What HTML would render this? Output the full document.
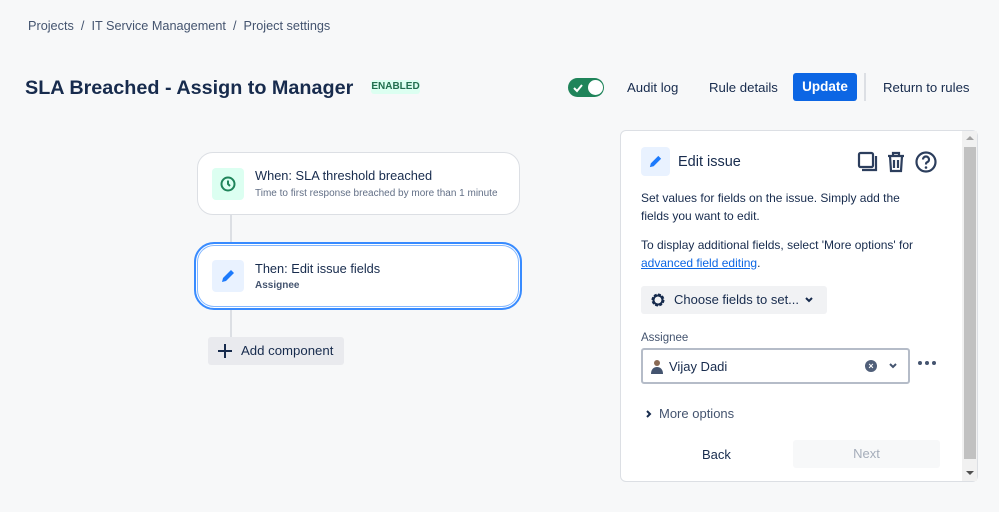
<!DOCTYPE html>
<html><head><style>
*{box-sizing:border-box;margin:0;padding:0}
body{width:999px;height:512px;background:#f7f8f9;font-family:"Liberation Sans",sans-serif;color:#172b4d;position:relative;overflow:hidden}
.a{position:absolute;white-space:nowrap}
</style></head><body>
<div class="a" style="left:28px;top:19px;font-size:12.7px;color:#44546f">Projects&nbsp;&nbsp;/&nbsp;&nbsp;IT Service Management&nbsp;&nbsp;/&nbsp;&nbsp;Project settings</div>
<div class="a" style="left:25px;top:77px;font-size:19.8px;font-weight:700;color:#172b4d">SLA Breached - Assign to Manager</div>
<div class="a" style="left:371px;top:80px;width:49px;height:14px;background:#dcfff1;color:#216e4e;font-size:10px;font-weight:700;text-align:center;line-height:14px;border-radius:3px">ENABLED</div>
<div class="a" style="left:568px;top:78px;width:36px;height:19px;background:#1f845a;border-radius:10px"></div>
<div class="a" style="left:588px;top:80px;width:15px;height:15px;background:#fff;border-radius:50%"></div>
<svg class="a" style="left:572px;top:82px" width="12" height="11" viewBox="0 0 12 11"><path d="M2 6l3 3 5-6" stroke="#fff" stroke-width="2" fill="none"/></svg>
<div class="a" style="left:627px;top:80px;font-size:13.2px;font-weight:500">Audit log</div>
<div class="a" style="left:709px;top:80px;font-size:13.2px;font-weight:500">Rule details</div>
<div class="a" style="left:793px;top:73px;width:64px;height:28px;background:#0c66e4;border-radius:3px;color:#fff;font-size:13.5px;font-weight:700;text-align:center;line-height:28px">Update</div>
<div class="a" style="left:864px;top:73px;width:2px;height:28px;background:#dcdfe4"></div>
<div class="a" style="left:883px;top:80px;font-size:13.2px;font-weight:500">Return to rules</div>

<div class="a" style="left:230px;top:214px;width:2px;height:126px;background:#dcdfe4"></div>
<div class="a" style="left:197px;top:152px;width:323px;height:63px;background:#fff;border:1px solid #dcdfe4;border-radius:16px"></div>
<div class="a" style="left:212px;top:168px;width:32px;height:32px;background:#dcfff1;border-radius:4px"></div>
<svg class="a" style="left:219px;top:175px" width="18" height="18" viewBox="0 0 18 18"><circle cx="9" cy="9" r="6.5" stroke="#1f845a" stroke-width="2" fill="none"/><path d="M9 5.5V9l2 2" stroke="#1f845a" stroke-width="2" fill="none"/></svg>
<div class="a" style="left:255px;top:168px;font-size:12.8px">When: SLA threshold breached</div>
<div class="a" style="left:255px;top:188px;font-size:10px;color:#626f86">Time to first response breached by more than 1 minute</div>

<div class="a" style="left:194px;top:242px;width:328px;height:68px;background:#fff;border:2px solid #388bff;border-radius:20px;box-shadow:0 0 0 1px #fff inset,0 0 0 2px #85b8ff inset"></div>
<div class="a" style="left:212px;top:260px;width:32px;height:32px;background:#e9f2ff;border-radius:4px"></div>
<svg class="a" style="left:220px;top:268px" width="16" height="16" viewBox="0 0 16 16"><path d="M2 14l1-4 8-8 3 3-8 8z" fill="#1d7afc"/></svg>
<div class="a" style="left:255px;top:261px;font-size:12.8px">Then: Edit issue fields</div>
<div class="a" style="left:255px;top:280px;font-size:10px;font-weight:700;color:#44546f">Assignee</div>

<div class="a" style="left:208px;top:337px;width:136px;height:28px;background:#e9eaee;border-radius:3px"></div>
<svg class="a" style="left:217px;top:343px" width="16" height="16" viewBox="0 0 16 16"><path d="M8 1v14M1 8h14" stroke="#172b4d" stroke-width="2"/></svg>
<div class="a" style="left:241px;top:343px;font-size:13.2px;font-weight:500">Add component</div>

<div class="a" style="left:620px;top:130px;width:358px;height:352px;background:#fff;border:1px solid #dcdfe4;border-radius:6px"></div>
<div class="a" style="left:962px;top:131px;width:15px;height:350px;background:#f1f1f1"></div>
<div class="a" style="left:964px;top:147px;width:12px;height:312px;background:#c1c1c1"></div>
<div class="a" style="left:966px;top:136px;width:0;height:0;border-left:4px solid transparent;border-right:4px solid transparent;border-bottom:4px solid #a3a3a3"></div>
<div class="a" style="left:966px;top:471px;width:0;height:0;border-left:4px solid transparent;border-right:4px solid transparent;border-top:4px solid #505050"></div>

<div class="a" style="left:641px;top:147px;width:29px;height:29px;background:#e9f2ff;border-radius:4px"></div>
<svg class="a" style="left:648px;top:154px" width="15" height="15" viewBox="0 0 16 16"><path d="M2 14l1-4 8-8 3 3-8 8z" fill="#1d7afc"/></svg>
<div class="a" style="left:678px;top:154px;font-size:14.5px;font-weight:500">Edit issue</div>
<svg class="a" style="left:857px;top:150px" width="84" height="24" viewBox="0 0 84 24"><rect x="2" y="3" width="14" height="14" rx="1.5" stroke="#2c3e5d" stroke-width="2.2" fill="none"/><path d="M19 6v14H5" stroke="#2c3e5d" stroke-width="2.2" fill="none"/><path d="M31 6h16M36 6V3h6v3M33 6l1 15h10l1-15M37 10v8M41 10v8" stroke="#2c3e5d" stroke-width="2.2" fill="none"/><circle cx="69" cy="12" r="9.5" stroke="#2c3e5d" stroke-width="2.2" fill="none"/><path d="M66 9.5a3 3 0 1 1 4 2.8c-1 .4-1 1-1 2.2" stroke="#2c3e5d" stroke-width="2.2" fill="none"/><circle cx="69" cy="17.5" r="1.3" fill="#2c3e5d"/></svg>
<div class="a" style="left:641px;top:190px;font-size:12px;line-height:17.5px;color:#172b4d">Set values for fields on the issue. Simply add the<br>fields you want to edit.</div>
<div class="a" style="left:641px;top:236px;font-size:12px;line-height:18px">To display additional fields, select 'More options' for<br><span style="color:#0c66e4;text-decoration:underline">advanced field editing</span>.</div>
<div class="a" style="left:641px;top:286px;width:186px;height:28px;background:#f1f2f4;border-radius:3px"></div>
<svg class="a" style="left:650px;top:292px" width="16" height="16" viewBox="0 0 16 16"><circle cx="8" cy="8" r="5" stroke="#172b4d" stroke-width="3" fill="none" stroke-dasharray="2.6 1.3"/><circle cx="8" cy="8" r="4.5" stroke="#172b4d" stroke-width="2" fill="none"/></svg>
<div class="a" style="left:674px;top:292px;font-size:13px;font-weight:500">Choose fields to set...</div>
<svg class="a" style="left:804px;top:296px" width="10" height="8" viewBox="0 0 10 8"><path d="M2 2l3 3 3-3" stroke="#172b4d" stroke-width="2" fill="none"/></svg>
<div class="a" style="left:641px;top:332px;font-size:11.5px;color:#44546f">Assignee</div>
<div class="a" style="left:641px;top:348px;width:269px;height:36px;border:2px solid #b5bcc8;border-radius:3px"></div>
<svg class="a" style="left:649px;top:359px" width="16" height="15" viewBox="0 0 16 15"><circle cx="8" cy="4" r="3" fill="#8a6a55"/><path d="M2 15c0-5 3-7 6-7s6 2 6 7z" fill="#44546f"/></svg>
<div class="a" style="left:669px;top:359px;font-size:13px">Vijay Dadi</div>
<div class="a" style="left:865px;top:360px;width:12px;height:12px;border-radius:50%;background:#505f79;color:#fff;font-size:9px;font-weight:700;text-align:center;line-height:12px">×</div>
<svg class="a" style="left:888px;top:362px" width="10" height="8" viewBox="0 0 10 8"><path d="M2 2l3 3 3-3" stroke="#44546f" stroke-width="2" fill="none"/></svg>
<svg class="a" style="left:917px;top:360px" width="20" height="6"><circle cx="3" cy="3" r="2" fill="#44546f"/><circle cx="10" cy="3" r="2" fill="#44546f"/><circle cx="17" cy="3" r="2" fill="#44546f"/></svg>
<svg class="a" style="left:645px;top:409px" width="8" height="10" viewBox="0 0 8 10"><path d="M2 2l3 3-3 3" stroke="#172b4d" stroke-width="2" fill="none"/></svg>
<div class="a" style="left:659px;top:406px;font-size:13px;color:#44546f">More options</div>
<div class="a" style="left:702px;top:447px;font-size:13px;font-weight:500">Back</div>
<div class="a" style="left:793px;top:440px;width:147px;height:28px;background:#f7f8f9;border-radius:3px;color:#a5adba;font-size:13px;font-weight:500;text-align:center;line-height:28px">Next</div>
</body></html>
